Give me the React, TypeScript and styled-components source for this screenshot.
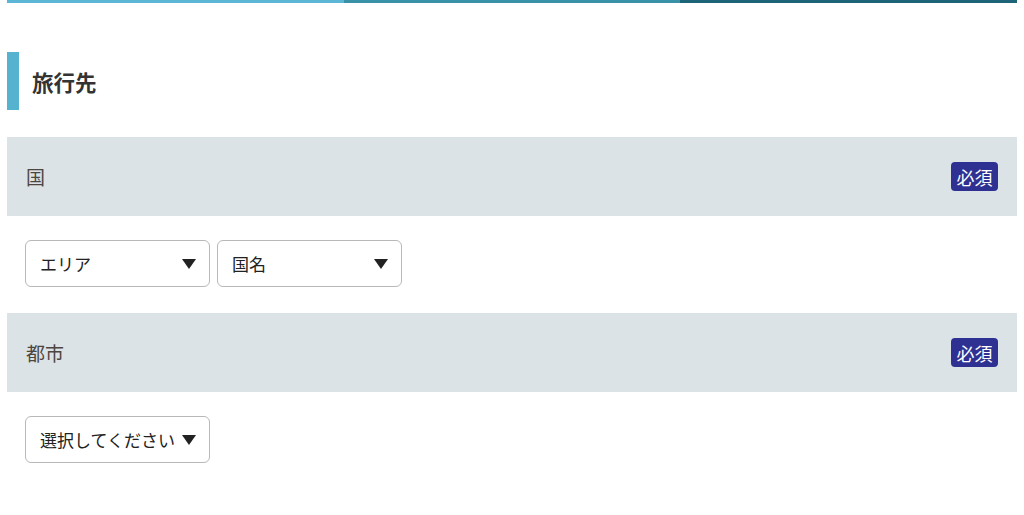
import styled, { createGlobalStyle } from "styled-components";

const GlobalStyle = createGlobalStyle`
  html, body {
    margin: 0;
    padding: 0;
    background: #fff;
    font-family: "Noto Sans CJK JP", "Noto Sans", sans-serif;
  }
`;

const Page = styled.div`
  padding: 0 7px;
`;

const TopBar = styled.div`
  display: flex;
  height: 3px;
`;

const TopSegment = styled.div<{ $color: string }>`
  flex: 1;
  background: ${(p) => p.$color};
`;

const Heading = styled.h2`
  display: flex;
  align-items: center;
  gap: 13px;
  height: 58px;
  margin: 49px 0 27px;
  font-size: 21.5px;
  font-weight: 700;
  color: #333;
  &::before {
    content: "";
    width: 12px;
    align-self: stretch;
    background: #55b3d0;
  }
`;

const FieldHeader = styled.div`
  display: flex;
  align-items: center;
  justify-content: space-between;
  height: 79px;
  padding: 0 19px;
  background: #dbe3e6;
  font-size: 19px;
  color: #4d4540;
`;

const Badge = styled.span`
  display: inline-flex;
  align-items: center;
  justify-content: center;
  width: 47px;
  height: 29px;
  border-radius: 4px;
  background: #2e3192;
  color: #fff;
  font-size: 18px;
`;

const FieldBody = styled.div`
  display: flex;
  gap: 7px;
  padding: 24px 18px 26px;
`;

const Select = styled.div`
  box-sizing: border-box;
  display: flex;
  align-items: center;
  justify-content: space-between;
  width: 185px;
  height: 47px;
  padding: 0 13px 0 14px;
  border: 1px solid #b8b8b8;
  border-radius: 6px;
  font-size: 17px;
  color: #222;
`;

const Arrow = () => (
  <svg width="14" height="10" viewBox="0 0 14 10">
    <path d="M0 0 H14 L7 10 Z" fill="#222" />
  </svg>
);

export default function App() {
  return (
    <Page>
      <GlobalStyle />
      <TopBar>
        <TopSegment $color="#5ab6d4" />
        <TopSegment $color="#3991a8" />
        <TopSegment $color="#1e6479" />
      </TopBar>
      <Heading>旅行先</Heading>

      <FieldHeader>
        <span>国</span>
        <Badge>必須</Badge>
      </FieldHeader>
      <FieldBody>
        <Select>
          <span>エリア</span>
          <Arrow />
        </Select>
        <Select>
          <span>国名</span>
          <Arrow />
        </Select>
      </FieldBody>

      <FieldHeader>
        <span>都市</span>
        <Badge>必須</Badge>
      </FieldHeader>
      <FieldBody>
        <Select>
          <span>選択してください</span>
          <Arrow />
        </Select>
      </FieldBody>
    </Page>
  );
}
